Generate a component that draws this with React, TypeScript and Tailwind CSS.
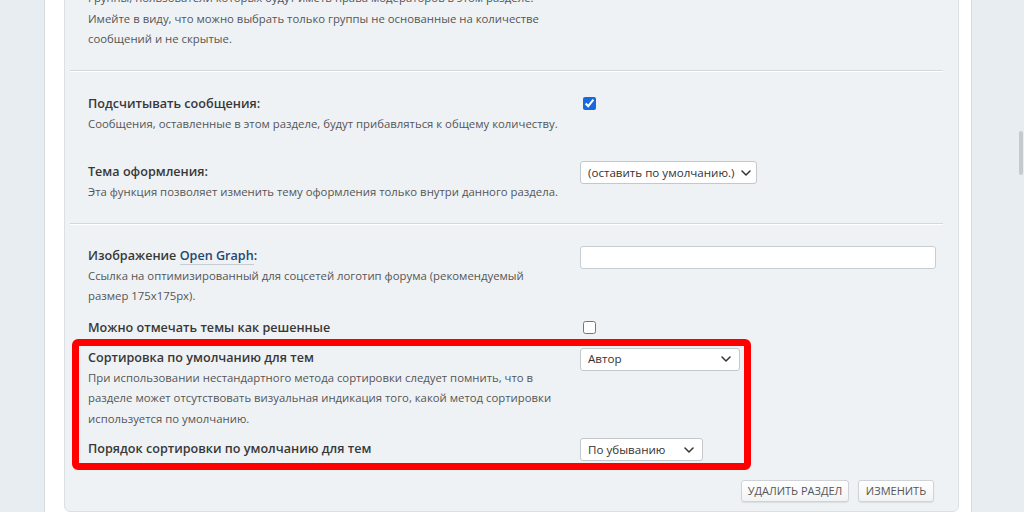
import { FC, ReactNode } from "react";

// Small pieces
const Chevron: FC = () => (
  <svg width="10" height="6" viewBox="0 0 10 6" className="shrink-0">
    <path d="M1 1l4 4 4-4" fill="none" stroke="#333" strokeWidth="1.5" strokeLinecap="round" strokeLinejoin="round" />
  </svg>
);

const Select: FC<{ value: string; width: string }> = ({ value, width }) => (
  <div
    className={`${width} h-[23px] flex items-center justify-between gap-[6px] pl-[7px] pr-[8px] bg-white border border-[#c3c8cd] rounded-[3px] text-[11.6px] text-[#333] leading-none whitespace-nowrap`}
  >
    <span>{value}</span>
    <Chevron />
  </div>
);

interface iRowProps {
  title: ReactNode;
  desc?: ReactNode;
  control: ReactNode;
  controlPad?: string;
  className?: string;
}

const Row: FC<iRowProps> = ({ title, desc, control, controlPad = "", className = "" }) => (
  <div className={`flex ${className}`}>
    <div className="w-[492px] shrink-0">
      <div className="text-[12.6px] font-semibold leading-[21px] text-[#383838]">{title}</div>
      {desc && <div className="text-[11.35px] leading-[20.5px] text-[#555]">{desc}</div>}
    </div>
    <div className={`flex-1 ${controlPad}`}>{control}</div>
  </div>
);

const Button: FC<{ children: ReactNode; width: string }> = ({ children, width }) => (
  <div
    className={`${width} h-[22px] flex items-center justify-center text-[11px] uppercase text-[#555] border border-[#cfd3d7] rounded-[3px] bg-gradient-to-b from-white to-[#f1f3f5] shadow-[0_1px_1px_rgba(0,0,0,0.08)] whitespace-nowrap`}
  >
    {children}
  </div>
);

export default function App() {
  return (
    <div className="relative w-[1024px] h-[512px] overflow-hidden flex bg-[#e8edf1] font-['Open_Sans','Noto_Sans',sans-serif]">
      {/* left gutter */}
      <div className="w-[45px] shrink-0 border-r border-[#d6dbe0]" />

      {/* white page column */}
      <div className="w-[927px] shrink-0 bg-white pl-[19px] pr-[12px] border-r border-[#d6dbe0]">
        <div className="w-[895px] -mt-[40px] bg-[#eef2f5] border border-[#dbe0e5] rounded-[6px] pl-[5px] pr-[15px] pb-[9px]">
          {/* section 1 (cut at top) */}
          <div className="pl-[18px] pt-[27px] pb-[20px] border-b border-[#d3d8dd]">
            <div className="text-[11.35px] leading-[20.5px] text-[#555]">
              Группы, пользователи которых будут иметь права модераторов в этом разделе.
              <br />
              Имейте в виду, что можно выбрать только группы не основанные на количестве
              <br />
              сообщений и не скрытые.
            </div>
          </div>

          {/* section 2 */}
          <div className="pl-[18px] pt-[21px] pb-[20px] border-t border-white border-b border-b-[#d3d8dd]">
            <Row
              title="Подсчитывать сообщения:"
              desc="Сообщения, оставленные в этом разделе, будут прибавляться к общему количеству."
              controlPad="pt-[4px]"
              control={
                <input type="checkbox" defaultChecked className="block ml-[3px] w-[13px] h-[13px] accent-[#1769dc]" />
              }
            />
            <Row
              className="mt-[27px]"
              title="Тема оформления:"
              desc="Эта функция позволяет изменить тему оформления только внутри данного раздела."
              control={<Select value="(оставить по умолчанию.)" width="w-[177px]" />}
            />
          </div>

          {/* section 3 */}
          <div className="pl-[18px] pt-[20px] border-t border-white">
            <Row
              title={
                <>
                  Изображение{" "}
                  <span className="text-[#25466e] border-b border-[#c5ccd4]">Open Graph</span>:
                </>
              }
              desc={
                <>
                  Ссылка на оптимизированный для соцсетей логотип форума (рекомендуемый
                  <br />
                  размер 175x175px).
                </>
              }
              controlPad="pt-[1px]"
              control={<div className="w-[356px] h-[23px] bg-white border border-[#c8cdd2] rounded-[3px]" />}
            />
            <Row
              className="mt-[10px]"
              title="Можно отмечать темы как решенные"
              controlPad="pt-[4px]"
              control={<input type="checkbox" className="block ml-[3px] w-[13px] h-[13px]" />}
            />
            <Row
              className="mt-[9px]"
              title="Сортировка по умолчанию для тем"
              desc={
                <>
                  При использовании нестандартного метода сортировки следует помнить, что в
                  <br />
                  разделе может отсутствовать визуальная индикация того, какой метод сортировки
                  <br />
                  используется по умолчанию.
                </>
              }
              controlPad="pt-[1px]"
              control={<Select value="Автор" width="w-[160px]" />}
            />
            <Row
              className="mt-[9px]"
              title="Порядок сортировки по умолчанию для тем"
              control={<Select value="По убыванию" width="w-[123px]" />}
            />
          </div>

          {/* buttons */}
          <div className="flex justify-end gap-[9px] pr-[9px] mt-[19px]">
            <Button width="w-[108px]">Удалить раздел</Button>
            <Button width="w-[76px]">Изменить</Button>
          </div>
        </div>
      </div>

      {/* right gutter */}
      <div className="flex-1" />

      {/* scrollbar thumb */}
      <div className="absolute left-[1019px] top-[131px] w-[4px] h-[44px] rounded-full bg-[#c6cacf]" />

      {/* red highlight annotation */}
      <div className="absolute left-[72px] top-[339px] w-[679px] h-[131px] border-[7px] border-[#fe0000] rounded-[6px] pointer-events-none" />
    </div>
  );
}
